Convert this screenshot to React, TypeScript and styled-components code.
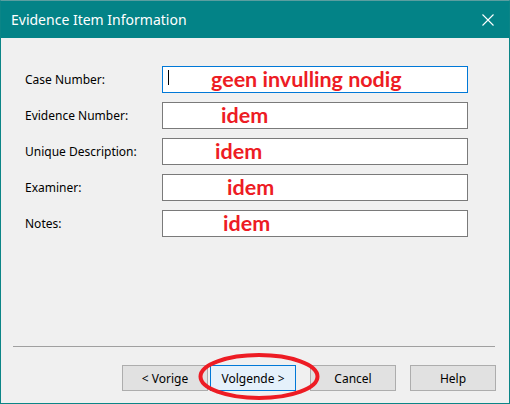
import React from "react";
import styled, { createGlobalStyle } from "styled-components";

const Global = createGlobalStyle`
  html, body { margin: 0; padding: 0; background: #ffffff; }
  body { font-family: "Noto Sans", "Segoe UI", sans-serif; }
  * { box-sizing: border-box; }
`;

const Window = styled.div`
  width: 510px;
  height: 404px;
  border: 1px solid #0b8587;
  border-top-color: #5a9ea0;
  background: #f0f0f0;
  display: flex;
  flex-direction: column;
`;

const TitleBar = styled.div`
  height: 37px;
  background: #038387;
  display: flex;
  align-items: center;
  justify-content: space-between;
  padding: 0 15px 0 10px;
  color: #ffffff;
  font-family: "Noto Sans", sans-serif;
  font-size: 14px;
  flex-shrink: 0;
`;

const CloseIcon = styled.svg`
  width: 12px;
  height: 12px;
  display: block;
`;

const Body = styled.div`
  flex: 1;
  display: flex;
  flex-direction: column;
  padding: 28px 14px 12px 12px;
`;

const Form = styled.div`
  display: grid;
  grid-template-columns: 149px 306px;
  grid-auto-rows: 27px;
  row-gap: 9px;
  align-items: center;
`;

const Label = styled.div`
  padding-left: 12px;
  font-size: 12px;
  color: #000000;
  font-family: "Noto Sans", sans-serif;
`;

const Field = styled.div<{ $focused?: boolean; $indent: number }>`
  position: relative;
  height: 27px;
  background: #ffffff;
  border: 1px solid ${(p) => (p.$focused ? "#0078d7" : "#7a7a7a")};
  padding-left: ${(p) => p.$indent}px;
  display: flex;
  align-items: center;
  overflow: visible;
`;

const Note = styled.span`
  font-family: "Lato", sans-serif;
  font-weight: 700;
  font-size: 21.5px;
  line-height: 27px;
  color: #ed1c24;
  white-space: nowrap;
`;

const Caret = styled.span`
  position: absolute;
  left: 5px;
  top: 3px;
  width: 1px;
  height: 15px;
  background: #000000;
`;

const Spacer = styled.div`
  flex: 1;
`;

const Separator = styled.div`
  height: 1px;
  background: #a0a0a0;
`;

const ButtonRow = styled.div`
  display: flex;
  justify-content: flex-end;
  margin-top: 18px;
  margin-right: -1px;
`;

const Button = styled.div<{ $primary?: boolean; $gap: number }>`
  position: relative;
  width: 86px;
  height: 26px;
  margin-left: ${(p) => p.$gap}px;
  border: 1px solid ${(p) => (p.$primary ? "#0078d7" : "#adadad")};
  background: ${(p) => (p.$primary ? "#e5f1fb" : "#e1e1e1")};
  display: flex;
  align-items: center;
  justify-content: center;
  font-size: 12px;
  color: #000000;
  font-family: "Noto Sans", sans-serif;
`;

const Ellipse = styled.svg`
  position: absolute;
  left: -13px;
  top: -13px;
  width: 122px;
  height: 47px;
  overflow: visible;
  pointer-events: none;
  z-index: 2;
`;

const fields = [
  { label: "Case Number:", note: "geen invulling nodig", indent: 48, focused: true },
  { label: "Evidence Number:", note: "idem", indent: 58 },
  { label: "Unique Description:", note: "idem", indent: 52 },
  { label: "Examiner:", note: "idem", indent: 64 },
  { label: "Notes:", note: "idem", indent: 60 },
];

export default function App() {
  return (
    <>
      <Global />
      <Window>
        <TitleBar>
          <span>Evidence Item Information</span>
          <CloseIcon viewBox="0 0 12 12">
            <path d="M0.5 0.5 L11.5 11.5 M11.5 0.5 L0.5 11.5" stroke="#ffffff" strokeWidth="1.1" fill="none" />
          </CloseIcon>
        </TitleBar>
        <Body>
          <Form>
            {fields.map((f) => (
              <React.Fragment key={f.label}>
                <Label>{f.label}</Label>
                <Field $focused={f.focused} $indent={f.indent}>
                  {f.focused && <Caret />}
                  <Note>{f.note}</Note>
                </Field>
              </React.Fragment>
            ))}
          </Form>
          <Spacer />
          <Separator />
          <ButtonRow>
            <Button $gap={0}>&lt; Vorige</Button>
            <Button $primary $gap={2}>
              Volgende &gt;
              <Ellipse viewBox="0 0 122 47">
                <ellipse cx="61" cy="23.5" rx="58.5" ry="21.5" stroke="#ed1c24" strokeWidth="4" fill="none" />
              </Ellipse>
            </Button>
            <Button $gap={14}>Cancel</Button>
            <Button $gap={14}>Help</Button>
          </ButtonRow>
        </Body>
      </Window>
    </>
  );
}
